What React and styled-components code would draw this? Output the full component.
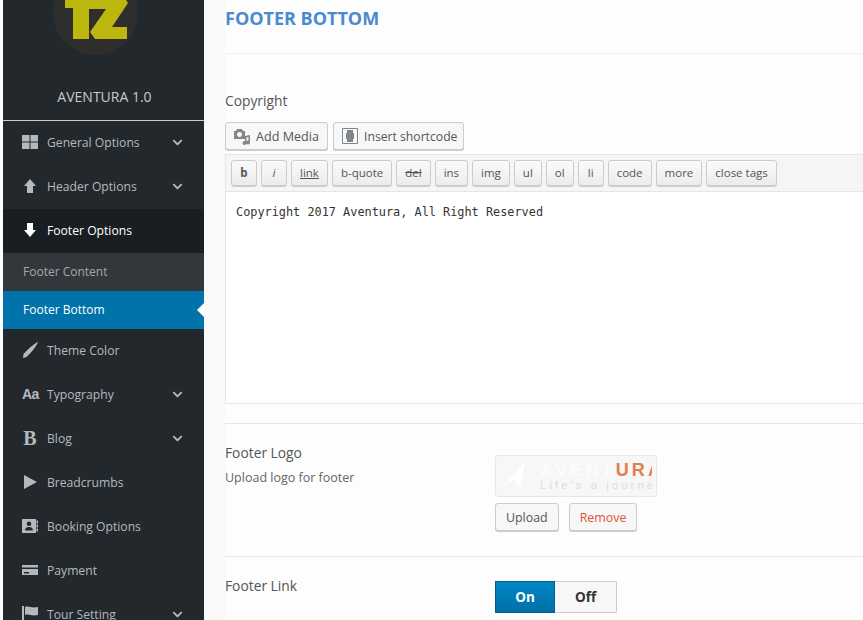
import React from "react";
import styled, { createGlobalStyle } from "styled-components";
import { FaChevronDown } from "react-icons/fa";

const GlobalStyle = createGlobalStyle`
  html, body {
    margin: 0;
    padding: 0;
    height: 620px;
    overflow: hidden;
    background: #fcfcfc;
  }
`;

const Page = styled.div`
  display: flex;
  width: 863px;
  height: 620px;
  overflow: hidden;
  padding-left: 3px;
  box-sizing: border-box;
  background: #fff;
  font-family: "Open Sans", sans-serif;
`;

const Sidebar = styled.aside`
  flex: 0 0 201px;
  height: 620px;
  overflow: hidden;
  background: #23282d;
`;

const Brand = styled.div`
  height: 120px;
  display: flex;
  flex-direction: column;
  align-items: center;
  border-bottom: 1px solid #c9cbcc;
`;

const BrandLogo = styled.svg`
  display: block;
  width: 90px;
  height: 56px;
  margin-right: 17px;
  flex: none;
`;

const BrandName = styled.div`
  margin-top: 31px;
  margin-left: 2px;
  font-size: 14px;
  line-height: 20px;
  color: #c8cacb;
`;

const MenuItem = styled.div`
  display: flex;
  align-items: center;
  height: 44px;
  box-sizing: border-box;
  padding: 0 21px 2px 19px;
  font-size: 12.15px;
  color: ${(p) => (p.$open ? "#fff" : "#b4b9be")};
  background: ${(p) => (p.$open ? "#191e23" : "transparent")};
`;

const MenuIcon = styled.svg`
  flex: 0 0 16px;
  width: 16px;
  height: 16px;
  margin-right: 9px;
  fill: ${(p) => (p.$open ? "#fff" : "#b4b9be")};
`;

const GlyphIcon = styled.span`
  flex: 0 0 16px;
  width: 16px;
  margin-right: 9px;
  text-align: center;
  font-family: ${(p) => (p.$serif ? '"Liberation Serif", serif' : '"Liberation Sans", sans-serif')};
  font-weight: 700;
  font-size: ${(p) => (p.$serif ? "20px" : "14px")};
  line-height: 16px;
  letter-spacing: ${(p) => (p.$serif ? "0" : "-0.5px")};
  color: #b4b9be;
`;

const MenuLabel = styled.span`
  flex: 1;
`;

const Chevron = styled(FaChevronDown)`
  font-size: 11px;
  color: #b4b9be;
`;

const SubItem = styled.div`
  position: relative;
  display: flex;
  align-items: center;
  height: 38px;
  box-sizing: border-box;
  padding: 0 0 2px 20px;
  font-size: 12px;
  color: ${(p) => (p.$active ? "#fff" : "#a5a8ab")};
  background: ${(p) => (p.$active ? "#0073aa" : "#32373c")};
`;

const ActiveArrow = styled.span`
  position: absolute;
  right: 0;
  top: 12px;
  width: 0;
  height: 0;
  border-top: 7px solid transparent;
  border-bottom: 7px solid transparent;
  border-right: 7px solid #fff;
`;

const Main = styled.main`
  flex: 1;
  min-width: 0;
  background: #f9f9f9;
  padding-left: 21px;
  color: #555;
`;

const Content = styled.div`
  height: 620px;
  background: #fdfdfd;
`;

const Heading = styled.h2`
  margin: 0;
  height: 54px;
  box-sizing: border-box;
  padding-top: 6px;
  font-size: 18px;
  line-height: 25px;
  font-weight: 700;
  color: #4a8bd0;
  border-bottom: 1px solid #f0f0f0;
`;

const Section = styled.section`
  padding: ${(p) => p.$pad || "20px 0"};
  border-bottom: ${(p) => (p.$last ? "none" : "1px solid #e5e5e5")};
`;

const Label = styled.div`
  font-size: 13.8px;
  line-height: 20px;
  font-weight: 500;
  color: #555;
`;

const MediaRow = styled.div`
  display: flex;
  gap: 5px;
  margin-top: 11px;
`;

const MediaButton = styled.button`
  display: flex;
  align-items: center;
  gap: 5px;
  width: ${(p) => p.$width}px;
  height: 28px;
  padding: 0 0 0 7px;
  box-sizing: border-box;
  font-family: inherit;
  font-size: ${(p) => p.$size}px;
  white-space: nowrap;
  color: #555;
  background: #f7f7f7;
  border: 1px solid #ccc;
  border-radius: 3px;
  box-shadow: 0 1px 0 #ccc;
`;

const MediaGlyph = styled.svg`
  display: block;
  flex: none;
  width: 18px;
  height: 18px;
  color: #82878c;
`;

const Editor = styled.div`
  margin-top: 4px;
  border: 1px solid #e5e5e5;
  border-right: none;
`;

const QuickTags = styled.div`
  display: flex;
  align-items: center;
  gap: 4px;
  height: 37px;
  padding-left: 5px;
  box-sizing: border-box;
  background: #f5f5f5;
  border-bottom: 1px solid #e5e5e5;
`;

const TagButton = styled.button`
  height: 26px;
  min-width: 26px;
  padding: 0 8px;
  box-sizing: border-box;
  font-family: inherit;
  font-size: 11.5px;
  line-height: 24px;
  color: #555;
  background: linear-gradient(#fafafa, #ececec);
  border: 1px solid #ccc;
  border-radius: 3px;
  box-shadow: 0 1px 0 #ccc;
  font-weight: ${(p) => (p.$bold ? 700 : 400)};
  font-style: ${(p) => (p.$italic ? "italic" : "normal")};
  text-decoration: ${(p) => p.$deco || "none"};
`;

const EditArea = styled.div`
  height: 211px;
  padding: 12px 10px;
  box-sizing: border-box;
  background: #fff;
  font-family: "DejaVu Sans Mono", monospace;
  font-size: 11.86px;
  line-height: 16px;
  color: #333;
`;

const FieldRow = styled.div`
  display: flex;
`;

const FieldInfo = styled.div`
  flex: 0 0 270px;
`;

const Hint = styled.div`
  margin-top: 5px;
  font-size: 12.5px;
  line-height: 20px;
  color: #666;
`;

const FieldControl = styled.div`
  margin-top: ${(p) => p.$offset}px;
`;

const Preview = styled.div`
  width: 162px;
  height: 42px;
  box-sizing: border-box;
  background: #f7f7f7;
  border: 1px solid #e8e8e8;
  border-radius: 3px;
`;

const PreviewImage = styled.div`
  display: flex;
  align-items: center;
  gap: 14px;
  width: 156px;
  height: 40px;
  padding-left: 4px;
  box-sizing: border-box;
  overflow: hidden;
`;

const PreviewMark = styled.svg`
  display: block;
  width: 26px;
  height: 30px;
  flex: none;
`;

const PreviewText = styled.div`
  font-family: "Liberation Sans", sans-serif;
  white-space: nowrap;
`;

const PreviewName = styled.div`
  font-size: 18px;
  line-height: 18px;
  font-weight: 700;
  letter-spacing: 3.2px;
  color: #fcfcfc;
  span {
    color: #e0814a;
  }
`;

const PreviewTag = styled.div`
  font-size: 11.5px;
  line-height: 13px;
  letter-spacing: 3px;
  color: #dcdcdc;
`;

const ActionRow = styled.div`
  display: flex;
  gap: 10px;
  margin-top: 6px;
`;

const ActionButton = styled.button`
  height: 28px;
  padding: 0 10px;
  box-sizing: border-box;
  font-family: inherit;
  font-size: 12.4px;
  color: ${(p) => (p.$danger ? "#e2533a" : "#555")};
  background: #f7f7f7;
  border: 1px solid #ccc;
  border-radius: 3px;
  box-shadow: 0 1px 0 #ccc;
`;

const Toggle = styled.div`
  display: flex;
  width: 122px;
  height: 32px;
  box-sizing: border-box;
  border: 1px solid #ccc;
  border-radius: 1px;
`;

const ToggleSide = styled.div`
  flex: ${(p) => (p.$on ? "0 0 60px" : "1")};
  box-sizing: border-box;
  display: flex;
  align-items: center;
  justify-content: center;
  font-size: 13.5px;
  font-weight: 700;
  color: ${(p) => (p.$on ? "#fff" : "#333")};
  background: ${(p) => (p.$on ? "linear-gradient(#0085c4, #0070a8)" : "#f7f7f7")};
  ${(p) => p.$on && "margin: -1px 0 -1px -1px; border: 1px solid #005f8e;"}
`;

const iconPaths = {
  grid: "M0 1h7.500v6.500H0zM8.500 1H16v6.500H8.500zM0 8.500h7.500V15H0zM8.500 8.500H16V15H8.500z",
  up: "M8 1l6 7h-3v7H5V8H2z",
  down: "M5 1h6v7h3l-6 7-6-7h3z",
  brush: "M15.500 0 16 .500C13 6 9 11 5 14.500L1 16.500l.5-4.500C5 8 10 3.500 15.500 0z",
  play: "M2 1l13 7-13 7z",
  book: "M0 1h14v14H0zM14.500 2.500H16v3h-1.500zM14.500 6.500H16v3h-1.500zM14.500 10.500H16v3h-1.500zM7 3.500a2.300 2.300 0 1 0 .01 0zM3 12.500h8c0-2.500-1.500-3.500-4-3.500s-4 1-4 3.500z",
  card: "M0 3h16v2.500H0zM0 7h16v6H0zM2 10v1.500h5V10z",
  flag: "M0 0h2v16H0zM3 1c4-1.500 6 1.500 13 0v8c-7 1.500-9-1.500-13 0z",
};

function Icon({ name, open }) {
  return (
    <MenuIcon viewBox="0 0 16 16" $open={open}>
      <path fillRule="evenodd" d={iconPaths[name]} />
    </MenuIcon>
  );
}

const topItems = [
  { icon: <Icon name="grid" />, label: "General Options", more: true },
  { icon: <Icon name="up" />, label: "Header Options", more: true },
  { icon: <Icon name="down" open />, label: "Footer Options", open: true },
];

const bottomItems = [
  { icon: <Icon name="brush" />, label: "Theme Color" },
  { icon: <GlyphIcon>Aa</GlyphIcon>, label: "Typography", more: true },
  { icon: <GlyphIcon $serif>B</GlyphIcon>, label: "Blog", more: true },
  { icon: <Icon name="play" />, label: "Breadcrumbs" },
  { icon: <Icon name="book" />, label: "Booking Options" },
  { icon: <Icon name="card" />, label: "Payment" },
  { icon: <Icon name="flag" />, label: "Tour Setting", more: true },
];

const tags = [
  { label: "b", $bold: true },
  { label: "i", $italic: true },
  { label: "link", $deco: "underline" },
  { label: "b-quote" },
  { label: "del", $deco: "line-through" },
  { label: "ins" },
  { label: "img" },
  { label: "ul" },
  { label: "ol" },
  { label: "li" },
  { label: "code" },
  { label: "more" },
  { label: "close tags" },
];

function Item({ item }) {
  return (
    <MenuItem $open={item.open}>
      {item.icon}
      <MenuLabel>{item.label}</MenuLabel>
      {item.more ? <Chevron /> : null}
    </MenuItem>
  );
}

export default function App() {
  return (
    <Page>
      <GlobalStyle />
      <Sidebar>
        <Brand>
          <BrandLogo viewBox="50 0 90 56">
            <circle cx="95.500" cy="12.500" r="42.500" fill="#2e2e2e" />
            <path fill="#bdb60f" d="M65 0h35v8H89v31H73V8h-8z" />
            <path fill="#bdb60f" d="M89 0h37l2 3-16 24h15v12H95l-5-7 16-23H89z" />
          </BrandLogo>
          <BrandName>AVENTURA 1.0</BrandName>
        </Brand>
        {topItems.map((item) => (
          <Item key={item.label} item={item} />
        ))}
        <SubItem>Footer Content</SubItem>
        <SubItem $active>
          Footer Bottom
          <ActiveArrow />
        </SubItem>
        {bottomItems.map((item) => (
          <Item key={item.label} item={item} />
        ))}
      </Sidebar>
      <Main>
        <Content>
          <Heading>FOOTER BOTTOM</Heading>
          <Section $pad="37px 0 19px">
            <Label>Copyright</Label>
            <MediaRow>
              <MediaButton $width={103} $size={12.6}>
                <MediaGlyph viewBox="0 0 18 18">
                  <path fill="currentColor" fillRule="evenodd" d="M1 4h2l1-2h5l1 2h2v8H1zM6.500 5a2.500 2.500 0 1 0 .01 0z" />
                  <path fill="currentColor" d="M12 9l5-1v7.500a2 2 0 1 1-1.500-2V10l-2 .5V16a2 2 0 1 1-1.500-2z" />
                </MediaGlyph>
                Add Media
              </MediaButton>
              <MediaButton $width={131} $size={12.2}>
                <MediaGlyph viewBox="0 0 18 18">
                  <path fill="none" stroke="currentColor" d="M1.500 1.500h15v15h-15z" />
                  <path fill="currentColor" d="M6 3h6v3h1v6h-1v3H6v-3H5V6h1z" />
                </MediaGlyph>
                Insert shortcode
              </MediaButton>
            </MediaRow>
            <Editor>
              <QuickTags>
                {tags.map(({ label, ...rest }) => (
                  <TagButton key={label} {...rest}>
                    {label}
                  </TagButton>
                ))}
              </QuickTags>
              <EditArea>Copyright 2017 Aventura, All Right Reserved</EditArea>
            </Editor>
          </Section>
          <Section $pad="19px 0 25px">
            <FieldRow>
              <FieldInfo>
                <Label>Footer Logo</Label>
                <Hint>Upload logo for footer</Hint>
              </FieldInfo>
              <FieldControl $offset={12}>
                <Preview>
                  <PreviewImage>
                    <PreviewMark viewBox="0 0 26 30">
                      <path fill="#fff" d="M1 28 24 2l-3 25-7-9z" />
                    </PreviewMark>
                    <PreviewText>
                      <PreviewName>
                        AVENT<span>URA</span>
                      </PreviewName>
                      <PreviewTag>Life's a journey</PreviewTag>
                    </PreviewText>
                  </PreviewImage>
                </Preview>
                <ActionRow>
                  <ActionButton>Upload</ActionButton>
                  <ActionButton $danger>Remove</ActionButton>
                </ActionRow>
              </FieldControl>
            </FieldRow>
          </Section>
          <Section $pad="19px 0" $last>
            <FieldRow>
              <FieldInfo>
                <Label>Footer Link</Label>
              </FieldInfo>
              <FieldControl $offset={5}>
                <Toggle>
                  <ToggleSide $on>On</ToggleSide>
                  <ToggleSide>Off</ToggleSide>
                </Toggle>
              </FieldControl>
            </FieldRow>
          </Section>
        </Content>
      </Main>
    </Page>
  );
}
